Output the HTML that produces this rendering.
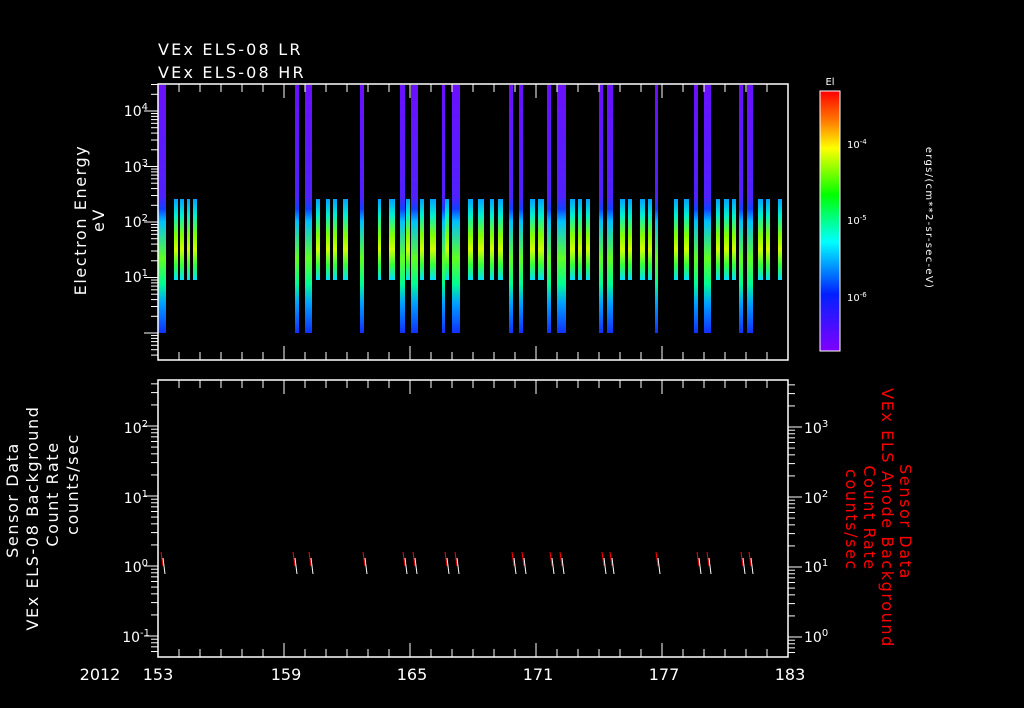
<!DOCTYPE html>
<html><head><meta charset="utf-8"><style>
html,body{margin:0;padding:0;background:#000;width:1024px;height:708px;overflow:hidden}
svg{display:block}
text{font-family:"DejaVu Sans","Liberation Sans",sans-serif;fill:#fff}
.big{font-size:16px;letter-spacing:1.6px}
</style></head><body>
<svg id="s" width="1024" height="708" viewBox="0 0 1024 708" xmlns="http://www.w3.org/2000/svg">
<defs>
<linearGradient id="cb" x1="0" y1="0" x2="0" y2="1">
<stop offset="0" stop-color="#ff0000"/><stop offset="0.12" stop-color="#ff8000"/><stop offset="0.22" stop-color="#ffff00"/><stop offset="0.4" stop-color="#00ff00"/><stop offset="0.58" stop-color="#00ffff"/><stop offset="0.78" stop-color="#0020ff"/><stop offset="1" stop-color="#8000ff"/>
</linearGradient>
<linearGradient id="bar" x1="0" y1="0" x2="0" y2="1">
<stop offset="0" stop-color="#00a0ff"/><stop offset="0.2" stop-color="#00f0d0"/><stop offset="0.45" stop-color="#80ff00"/><stop offset="0.62" stop-color="#d0ff00"/><stop offset="0.82" stop-color="#30ff40"/><stop offset="1" stop-color="#00e0ff"/>
</linearGradient>
<linearGradient id="spk" x1="0" y1="0" x2="0" y2="1">
<stop offset="0" stop-color="#6a10ff"/><stop offset="0.45" stop-color="#5020ff"/><stop offset="0.5" stop-color="#1040ff"/><stop offset="0.55" stop-color="#00c0ff"/><stop offset="0.7" stop-color="#60ff20"/><stop offset="0.8" stop-color="#00ff90"/><stop offset="0.88" stop-color="#00a0ff"/><stop offset="1" stop-color="#1030ff"/>
</linearGradient>
</defs>
<g id="bars"></g>
<g id="ax" stroke="#fff" stroke-width="1.5" fill="none">
<rect x="158" y="84" width="630" height="276"/>
<rect x="158" y="380" width="630" height="277"/>
</g>
<g id="tk" stroke="#fff" stroke-width="1"></g>
<text x="158" y="55" class="big" style="letter-spacing:2.2px">VEx ELS-08 LR</text>
<text x="158" y="78" class="big" style="letter-spacing:2.2px">VEx ELS-08 HR</text>
<g font-size="14" text-anchor="end">
<text x="148" y="116">10<tspan dy="-6" font-size="10">4</tspan></text>
<text x="148" y="172">10<tspan dy="-6" font-size="10">3</tspan></text>
<text x="148" y="227">10<tspan dy="-6" font-size="10">2</tspan></text>
<text x="148" y="282">10<tspan dy="-6" font-size="10">1</tspan></text>
<text x="148" y="433">10<tspan dy="-6" font-size="10">2</tspan></text>
<text x="148" y="503">10<tspan dy="-6" font-size="10">1</tspan></text>
<text x="148" y="572">10<tspan dy="-6" font-size="10">0</tspan></text>
<text x="150" y="642">10<tspan dy="-6" font-size="10">-1</tspan></text>
</g>
<g font-size="14">
<text x="804" y="433">10<tspan dy="-6" font-size="10">3</tspan></text>
<text x="804" y="503">10<tspan dy="-6" font-size="10">2</tspan></text>
<text x="804" y="572">10<tspan dy="-6" font-size="10">1</tspan></text>
<text x="804" y="642">10<tspan dy="-6" font-size="10">0</tspan></text>
</g>
<g class="big" text-anchor="middle">
<text transform="translate(86,220) rotate(-90)">Electron Energy</text>
<text transform="translate(104,220) rotate(-90)">eV</text>
<text transform="translate(18,500) rotate(-90)">Sensor Data</text>
<text transform="translate(38,518) rotate(-90)">VEx ELS-08 Background</text>
<text transform="translate(58,494) rotate(-90)">Count Rate</text>
<text transform="translate(78,484) rotate(-90)">counts/sec</text>
<text transform="translate(900,522) rotate(90)" style="fill:#f00">Sensor Data</text>
<text transform="translate(882,518) rotate(90)" style="fill:#f00">VEx ELS Anode Background</text>
<text transform="translate(864,518) rotate(90)" style="fill:#f00">Count Rate</text>
<text transform="translate(846,520) rotate(90)" style="fill:#f00">counts/sec</text>
</g>
<g font-size="16" text-anchor="middle">
<text x="100" y="680">2012</text>
<text x="158" y="680">153</text><text x="286" y="680">159</text><text x="412" y="680">165</text>
<text x="538" y="680">171</text><text x="664" y="680">177</text><text x="790" y="680">183</text>
</g>
<rect x="820" y="91" width="20" height="260" fill="url(#cb)" stroke="#fff" stroke-width="1"/>
<text x="830" y="85" font-size="10" text-anchor="middle">El</text>
<g font-size="10"><text x="847" y="148">10<tspan dy="-4" font-size="7">-4</tspan></text>
<text x="847" y="224">10<tspan dy="-4" font-size="7">-5</tspan></text>
<text x="847" y="301">10<tspan dy="-4" font-size="7">-6</tspan></text></g>
<text transform="translate(926,218) rotate(90)" font-size="10" text-anchor="middle" style="letter-spacing:1.3px">ergs/(cm**2-sr-sec-eV)</text>
</svg>
<script>
var NS="http://www.w3.org/2000/svg",b=document.getElementById("bars"),t=document.getElementById("tk");
function r(x,y,w,h,f){var e=document.createElementNS(NS,"rect");e.setAttribute("x",x);e.setAttribute("y",y);e.setAttribute("width",w);e.setAttribute("height",h);e.setAttribute("fill",f);b.appendChild(e);}
function l(x1,y1,x2,y2,c){var e=document.createElementNS(NS,"line");e.setAttribute("x1",x1);e.setAttribute("y1",y1);e.setAttribute("x2",x2);e.setAttribute("y2",y2);e.setAttribute("stroke",c||"#fff");(c?b:t).appendChild(e);}
var cb=[[174,4],[180,4],[187,3],[193,4],[316,4],[326,4],[333,4],[343,5],[378,3],[389,6],[406,4],[420,4],[430,6],[444,5],[468,5],[478,6],[490,4],[498,5],[530,5],[538,6],[570,5],[578,4],[586,4],[620,5],[628,4],[640,5],[648,4],[674,4],[684,5],[716,4],[724,5],[732,4],[758,5],[766,4],[778,4]];
cb.forEach(function(a){r(a[0],199,a[1],81,"url(#bar)");});
var sp=[[158,8],[295,4],[305,7],[360,4],[400,5],[411,7],[442,3],[452,8],[509,4],[519,4],[547,4],[557,9],[599,4],[607,6],[655,3],[694,4],[704,7],[739,4],[747,6]];
sp.forEach(function(a){r(a[0],85,a[1],248,"url(#spk)");});
for(var d=0;d<=30;d++){var x=158+d*21,h=(d%6==0)?14:8;l(x,84,x,84+h);l(x,360,x,360-h);l(x,380,x,380+h);l(x,657,x,657-h);}
function lg(y0,dec,top,bot,x,dir){for(var k=-2;k<6;k++){for(var m=1;m<10;m++){var y=y0-(k+Math.log10(m))*dec;if(y<top||y>bot)continue;var w=m==1?14:7;l(x,y,x+dir*w,y);}}}
lg(333,55.5,84,360,158,-1);lg(566,70,380,657,158,-1);lg(637,70,380,657,788,1);
for(var m=1;m<10;m++){[148,224,301].forEach(function(y0){var y=y0-Math.log10(m)*77;if(y>91&&y<351)l(833,y,840,y);});}
var pts=[161,293,309,363,403,413,445,455,512,522,550,560,602,610,656,697,707,741,749];
pts.forEach(function(x){l(x,552,x+2,566,"#f00");l(x+2,558,x+4,574,"#fff");});
</script>
</body></html>
